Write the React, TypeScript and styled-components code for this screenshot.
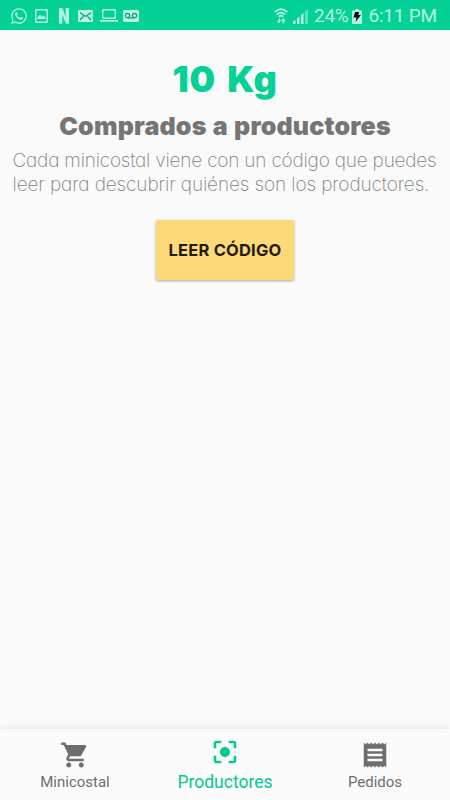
import React from "react";
import styled, { createGlobalStyle } from "styled-components";
import { MdShoppingCart, MdCenterFocusStrong, MdReceipt } from "react-icons/md";
import { FaWhatsapp } from "react-icons/fa";

const GlobalStyle = createGlobalStyle`
  * { box-sizing: border-box; }
  html, body { margin: 0; background: #fafafa; }
`;

const Screen = styled.div`
  width: 450px;
  height: 800px;
  display: flex;
  flex-direction: column;
  background: #fafafa;
  font-family: Roboto, sans-serif;
  overflow: hidden;
`;

const StatusBar = styled.header`
  height: 30px;
  flex: none;
  display: flex;
  justify-content: space-between;
  padding: 0 13px 0 10px;
  background: #04d195;
  color: #b5f5df;
`;

const Notifications = styled.div`
  display: flex;
  align-items: center;
  padding-top: 1px;
`;

const Glyph = styled.svg<{ $gap?: number }>`
  flex: none;
  display: block;
  margin-left: ${(p) => p.$gap ?? 0}px;
`;

const WhatsApp = styled(FaWhatsapp)`
  width: 18px;
  height: 18px;
`;

const SystemInfo = styled.div`
  display: flex;
  align-items: center;
  padding-top: 2px;
`;

const StatusText = styled.span<{ $gap: number; $spacing: number }>`
  margin-left: ${(p) => p.$gap}px;
  font-size: 19px;
  line-height: 28px;
  letter-spacing: ${(p) => p.$spacing}px;
  white-space: nowrap;
`;

const Content = styled.main`
  flex: 1;
  display: flex;
  flex-direction: column;
  align-items: center;
  font-family: Inter, sans-serif;
`;

const Amount = styled.h1`
  margin: 26px 0 0;
  font-size: 36px;
  line-height: 46px;
  font-weight: 900;
  letter-spacing: 0.5px;
  word-spacing: 4px;
  color: #04d195;
`;

const Title = styled.h2`
  margin: 8px 0 0;
  font-size: 25px;
  line-height: 32px;
  font-weight: 900;
  letter-spacing: 0.2px;
  word-spacing: 1px;
  color: #757575;
  white-space: nowrap;
`;

const Description = styled.p`
  align-self: stretch;
  margin: 7px 0 0;
  padding-left: 12.5px;
  font-size: 19px;
  line-height: 24px;
  font-weight: 200;
  font-feature-settings: "cv11";
  color: #808080;
`;

const Line = styled.span<{ $spacing: number }>`
  display: block;
  white-space: nowrap;
  letter-spacing: ${(p) => p.$spacing}px;
`;

const ReadButton = styled.button`
  width: 138px;
  height: 60px;
  margin-top: 23px;
  padding: 1px 0 0;
  border: 0;
  border-radius: 1px;
  background: #fdd978;
  box-shadow: 0 1px 3px rgba(0, 0, 0, 0.32);
  color: #1f1c14;
  font: 700 16.5px/59px Inter, sans-serif;
  letter-spacing: 0.2px;
  white-space: nowrap;
`;

const BottomNav = styled.nav`
  height: 71px;
  flex: none;
  display: grid;
  grid-template-columns: repeat(3, 1fr);
  background: #fbfbfb;
  box-shadow: 0 0 6px rgba(0, 0, 0, 0.12);
`;

const Tab = styled.a<{ $active?: boolean }>`
  display: flex;
  flex-direction: column;
  align-items: center;
  padding-top: ${(p) => (p.$active ? 8 : 11)}px;
  color: ${(p) => (p.$active ? "#04c990" : "#6e6e6e")};

  svg {
    width: 30px;
    height: 30px;
    flex: none;
  }
`;

const TabLabel = styled.span<{ $active?: boolean }>`
  margin-top: ${(p) => (p.$active ? 5 : 2)}px;
  font-size: ${(p) => (p.$active ? 17.5 : 15)}px;
  line-height: 20px;
  letter-spacing: 0;
`;

export default function App() {
  return (
    <>
      <GlobalStyle />
      <Screen>
        <StatusBar>
          <Notifications>
            <WhatsApp />
            <Glyph $gap={6} width="15" height="16" viewBox="0 0 15 16" fill="none">
              <rect x="1.8" y="1.8" width="11.4" height="12.4" rx="0.8" stroke="currentColor" strokeWidth="1.5" />
              <path d="M3.5 11V9.5L6 6.5l2 2.3 1.7-1.3 2 2.5v1Z" fill="currentColor" />
            </Glyph>
            <Glyph $gap={10} width="10" height="16" viewBox="0 0 10 16">
              <path d="M0 0h3.4l3.2 9V0H10v16l-3.2-.5L3.4 6.4V15.5L0 16Z" fill="currentColor" />
            </Glyph>
            <Glyph $gap={9} width="15" height="12" viewBox="0 0 15 12" fill="none">
              <rect width="15" height="12" rx="1.2" fill="currentColor" />
              <path d="m2 2.5 5.5 4 5.5-4M2 10l3.5-3.5M13 10 9.5 6.5" stroke="#0a9e76" strokeWidth="1.2" />
            </Glyph>
            <Glyph $gap={7} width="18" height="13" viewBox="0 0 18 13" fill="none">
              <rect x="2.7" y="0.7" width="12.6" height="8.6" rx="0.6" stroke="currentColor" strokeWidth="1.4" />
              <path d="M0 11h18v1.7H0Z" fill="currentColor" />
            </Glyph>
            <Glyph $gap={5} width="16" height="12" viewBox="0 0 16 12" fill="none">
              <rect width="16" height="12" rx="1.5" fill="currentColor" />
              <circle cx="4.5" cy="5.5" r="2.2" stroke="#0a9e76" strokeWidth="1.2" />
              <circle cx="11.5" cy="5.5" r="2.2" stroke="#0a9e76" strokeWidth="1.2" />
              <path d="M4.5 8h7" stroke="#0a9e76" strokeWidth="1.2" />
            </Glyph>
          </Notifications>
          <SystemInfo>
            <Glyph width="14" height="16" viewBox="0 0 14 16" fill="none">
              <path d="M.7 4.2Q7-1.8 13.3 4.2M2.7 6.5q4.3-3.9 8.6 0M4.6 8.7q2.4-2 4.8 0" stroke="currentColor" strokeWidth="1.6" />
              <path d="M3 12.5h2V10h1.2v2.5h1L4.8 15.5ZM7 12.7 9.3 10l2.2 2.7h-1.2v2.5H8.7v-2.5Z" fill="currentColor" />
            </Glyph>
            <Glyph $gap={5} width="15" height="15" viewBox="0 0 15 15" fill="currentColor">
              <path d="M0 12.5 2.5 11v4H0ZM4 9.5l2.5-2V15H4ZM8 6l2.5-2v11H8Z" />
              <path d="M12 2.5 15 0v15h-3Z" opacity=".5" />
            </Glyph>
            <StatusText $gap={6} $spacing={-0.3}>24%</StatusText>
            <Glyph $gap={4} width="10" height="15" viewBox="0 0 10 15">
              <path d="M3 0h4v1.5h3V15H0V1.5h3Z" fill="currentColor" />
              <path d="M3 3h4.2L6.2 6H9l-5.5 7 1-4.5H1.5Z" fill="#111" />
            </Glyph>
            <StatusText $gap={6} $spacing={-0.2}>6:11 PM</StatusText>
          </SystemInfo>
        </StatusBar>
        <Content>
          <Amount>10 Kg</Amount>
          <Title>Comprados a productores</Title>
          <Description>
            <Line $spacing={-0.2}>Cada minicostal viene con un código que puedes</Line>
            <Line $spacing={-0.11}>leer para descubrir quiénes son los productores.</Line>
          </Description>
          <ReadButton>LEER CÓDIGO</ReadButton>
        </Content>
        <BottomNav>
          <Tab>
            <MdShoppingCart />
            <TabLabel>Minicostal</TabLabel>
          </Tab>
          <Tab $active>
            <MdCenterFocusStrong />
            <TabLabel $active>Productores</TabLabel>
          </Tab>
          <Tab>
            <MdReceipt />
            <TabLabel>Pedidos</TabLabel>
          </Tab>
        </BottomNav>
      </Screen>
    </>
  );
}
